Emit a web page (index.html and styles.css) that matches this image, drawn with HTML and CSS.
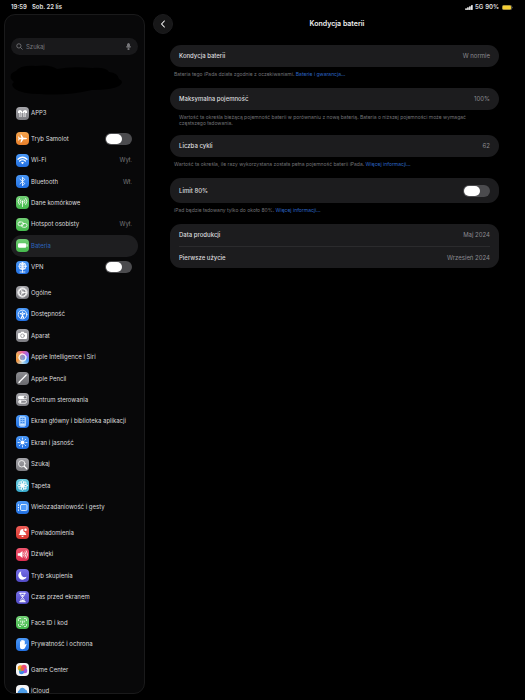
FILE: index.html
```html
<!DOCTYPE html>
<html lang="pl">
<head>
<meta charset="utf-8">
<meta name="viewport" content="width=device-width, initial-scale=1">
<title>Kondycja baterii</title>
<link rel="stylesheet" href="styles.css">
</head>
<body>
<header class="status">
  <span class="time">19:59</span>
  <span class="date">Sob. 22 lis</span>
  <svg class="signal" viewBox="0 0 18 12"><rect x="0" y="8" width="3.8" height="4" rx="1"/><rect x="4.6" y="5.5" width="3.8" height="6.5" rx="1"/><rect x="9.3" y="3" width="3.8" height="9" rx="1"/><rect x="14" y="0" width="3.8" height="12" rx="1"/></svg>
  <span>5G</span>
  <span>90%</span>
  <svg class="battery" viewBox="0 0 22 10"><rect x=".5" y=".5" width="19" height="9" rx="3" fill="#5c5022" stroke="#777"/><rect x="1" y="1" width="17" height="8" rx="2.4" fill="#f5cf35"/><path d="M20.6 3.3v3.4q1-.6 1-1.700t-1-1.700z" fill="#888"/></svg>
</header>
<div class="layout">
  <aside class="sidebar">
    <label class="search">
      <svg class="lens" viewBox="0 0 14 14"><circle cx="5.800" cy="5.800" r="4.300"/><path d="M9 9l4 4"/></svg>
      <input type="search" placeholder="Szukaj" aria-label="Szukaj">
      <svg class="mic" viewBox="0 0 10 14"><rect x="3" y="1" width="4" height="7.500" rx="2" fill="#77777b"/><path d="M1.200 6v1q0 3.500 3.800 3.500T8.800 7V6M5 10.500V13M3 13h4"/></svg>
    </label>
    <svg class="account" viewBox="0 0 112 34" aria-hidden="true"><path d="M1 16Q-1 10 6 8Q10 2 26 3Q40 1 47 6Q62 3 82 5Q96 4 99 9Q108 10 109 16Q115 19 109 23Q102 27 82 27Q56 33 30 31Q12 31 5 26Q0 22 4 19Z"/></svg>
    <nav class="menu">
      <ul class="group one">
        <li><a class="row" href="#app3"><span class="tile gray"><svg viewBox="0 0 26 26"><path class="f" d="M4 9q0-3 4-3l4 2 1 3 1-3 4-2q4 0 4 3v3h-3v8h-4v-8h-4v8H7v-8H4z"/><path d="M13 7v3M9 11v8M17 11v8" stroke="#99999e"/></svg></span>APP3</a></li>
      </ul>
      <ul class="group seven">
        <li class="row"><span class="tile orange"><svg viewBox="0 0 26 26"><path class="f" d="M22 13q0 1.500-3 1.500h-4L10.500 21H8.700l2.100-6.500H7.200L5.600 17H4.200L5 13l-.8-4h1.400l1.600 2.500h3.600L8.700 5h1.800l4.500 6.500h4q3 0 3 1.500z"/></svg></span><label for="plane">Tryb Samolot</label><input id="plane" class="switch" type="checkbox"></li>
        <li><a class="row" href="#wifi"><span class="tile blue"><svg viewBox="0 0 26 26"><path class="w" d="M4 10.500q9-8 18 0M7.200 14q5.800-5 11.600 0"/><path class="f" d="M9.700 17q3.300-2.500 6.600 0L13 20.500z"/></svg></span>Wi-Fi<span class="value">Wył.</span></a></li>
        <li><a class="row" href="#bluetooth"><span class="tile blue"><svg viewBox="0 0 26 26"><path d="M8 8.500l9.500 8.500-4.500 4.500v-17L17.500 9 8 17.500"/></svg></span>Bluetooth<span class="value">Wł.</span></a></li>
        <li><a class="row" href="#cell"><span class="tile green"><svg viewBox="0 0 26 26"><circle class="f" cx="13" cy="11" r="2"/><path d="M13 12v9M9.500 7.500q-3 3.500 0 7M16.500 7.500q3 3.500 0 7M6.500 5q-5 6 0 12M19.500 5q5 6 0 12"/></svg></span>Dane komórkowe</a></li>
        <li><a class="row" href="#hotspot"><span class="tile green"><svg viewBox="0 0 26 26"><rect x="4" y="8" width="11" height="7.500" rx="3.700"/><rect x="11" y="11" width="11" height="7.500" rx="3.700"/></svg></span>Hotspot osobisty<span class="value">Wył.</span></a></li>
        <li><a class="row selected" href="#battery" aria-current="page"><span class="tile green"><svg viewBox="0 0 26 26"><rect class="f" x="4" y="8.500" width="16.500" height="9" rx="2.500"/><path d="M22.300 11.500v3"/></svg></span>Bateria</a></li>
        <li class="row"><span class="tile blue"><svg viewBox="0 0 26 26"><circle cx="13" cy="10.500" r="7"/><path d="M13 3.500v19M6 10.500h14M8 6q5 3 10 0M8 15q5-3 10 0M13 3.500q-6.500 7 0 14q6.500-7 0-14M8 22h10"/></svg></span><label for="vpn">VPN</label><input id="vpn" class="switch" type="checkbox"></li>
      </ul>
      <ul class="group eleven">
        <li><a class="row" href="#general"><span class="tile gray"><svg viewBox="0 0 26 26"><circle class="w" cx="13" cy="13" r="7.500"/><circle cx="13" cy="13" r="9.200" stroke-dasharray="1.500 1.400"/><path d="M13 13h7M13 13l-3.500-6M13 13l-3.500 6"/><circle cx="13" cy="13" r="2.500"/></svg></span>Ogólne</a></li>
        <li><a class="row" href="#access"><span class="tile blue"><svg viewBox="0 0 26 26"><circle cx="13" cy="13" r="8.700"/><circle class="f" cx="13" cy="8.500" r="1.500"/><path class="w" d="M8.500 11.200l4.500 1 4.500-1M13 12v3l-2 4M13 15l2 4"/></svg></span>Dostępność</a></li>
        <li><a class="row" href="#camera"><span class="tile gray"><svg viewBox="0 0 26 26"><path class="f" d="M4 10q0-2 2-2h3l1.500-2.500h5L17 8h3q2 0 2 2v8q0 2-2 2H6q-2 0-2-2z"/><circle cx="13" cy="13.500" r="3.700" stroke="#929297"/></svg></span>Aparat</a></li>
        <li><a class="row" href="#siri"><span class="tile siri"><svg viewBox="0 0 26 26"><circle class="w" cx="13" cy="13" r="6.500" fill="#8996cb" opacity=".8"/><path d="M13 5l4 3 4 3-1 5-3 4-5 1-5-3-2-5 3-5z" opacity=".7"/></svg></span>Apple Intelligence i Siri</a></li>
        <li><a class="row" href="#pencil"><span class="tile steel"><svg viewBox="0 0 26 26"><path class="w" d="M6.500 20L20.500 6"/><path d="M5 21.500l3-1"/></svg></span>Apple Pencil</a></li>
        <li><a class="row" href="#control"><span class="tile gray"><svg viewBox="0 0 26 26"><rect class="f" x="4" y="5.500" width="18" height="6.500" rx="3.200"/><circle cx="18" cy="8.700" r="1.800" fill="#77777c" stroke="#77777c"/><rect x="5" y="14.500" width="16" height="6" rx="3"/><circle class="f" cx="8.500" cy="17.500" r="2.300"/></svg></span>Centrum sterowania</a></li>
        <li><a class="row" href="#home"><span class="tile blue"><svg viewBox="0 0 26 26"><rect x="7" y="3.500" width="12" height="19" rx="2.500" fill="#8fc2ff" stroke="#c4dfff"/><path d="M10 7h1.500M14.500 7H16M10 11h1.500M14.500 11H16M10 15h1.500M14.500 15H16" stroke="#2878e5"/><path d="M9.500 19.500h7"/></svg></span>Ekran główny i biblioteka aplikacji</a></li>
        <li><a class="row" href="#display"><span class="tile blue"><svg viewBox="0 0 26 26"><circle class="f" cx="13" cy="13" r="4"/><path d="M13 4v2.500M13 19.500V22M4 13h2.500M19.500 13H22M6.600 6.600l1.800 1.800M17.600 17.600l1.800 1.800M6.600 19.400l1.800-1.800M17.600 8.400l1.800-1.800"/></svg></span>Ekran i jasność</a></li>
        <li><a class="row" href="#search"><span class="tile gray"><svg viewBox="0 0 26 26"><circle cx="11.500" cy="11.500" r="6.500"/><path class="w" d="M16.500 16.500l5 5"/></svg></span>Szukaj</a></li>
        <li><a class="row" href="#wallpaper"><span class="tile cyan"><svg viewBox="0 0 26 26"><g><ellipse cx="13" cy="7.500" rx="2.700" ry="4"/><ellipse cx="13" cy="18.500" rx="2.700" ry="4"/><ellipse cx="7.500" cy="13" rx="4" ry="2.700"/><ellipse cx="18.500" cy="13" rx="4" ry="2.700"/></g><g transform="rotate(45 13 13)"><ellipse cx="13" cy="7.500" rx="2.700" ry="4"/><ellipse cx="13" cy="18.500" rx="2.700" ry="4"/><ellipse cx="7.500" cy="13" rx="4" ry="2.700"/><ellipse cx="18.500" cy="13" rx="4" ry="2.700"/></g><circle class="f" cx="13" cy="13" r="3"/></svg></span>Tapeta</a></li>
        <li><a class="row" href="#multitask"><span class="tile blue"><svg viewBox="0 0 26 26"><rect x="9" y="7" width="13" height="12" rx="2.500" fill="#4e9bfb"/><path class="w" d="M5 7.500v1M5 12.500v1M5 17.500v1"/></svg></span>Wielozadaniowość i gesty</a></li>
      </ul>
      <ul class="group four">
        <li><a class="row" href="#notifications"><span class="tile red"><svg viewBox="0 0 26 26"><path class="f" d="M5 18q3-2.500 3-7t5-5q1 0 2 .5a4 4 0 0 0 3.500 6q.5 3 2.500 5.500zM10.500 19.500h5q-.5 2.500-2.500 2.500t-2.500-2.500z"/><circle class="f" cx="19" cy="7.500" r="2.500"/></svg></span>Powiadomienia</a></li>
        <li><a class="row" href="#sounds"><span class="tile pink"><svg viewBox="0 0 26 26"><path class="f" d="M3.500 10.500h3.800L13 6v14l-5.700-4.500H3.500z"/><path d="M15.500 10q2 3 0 6M18 7.800q4 5.200 0 10.400M20.500 5.500q5.500 7.500 0 15"/></svg></span>Dźwięki</a></li>
        <li><a class="row" href="#focus"><span class="tile violet"><svg viewBox="0 0 26 26"><path class="f" d="M10.500 4.500a8.700 8.700 0 1 0 11 11q-6 2.500-9.500-1.500-3-4-1.500-9.500z"/></svg></span>Tryb skupienia</a></li>
        <li><a class="row" href="#screentime"><span class="tile violet"><svg viewBox="0 0 26 26"><path class="w" d="M7.500 4.500h11M7.500 21.500h11"/><path d="M9 5q0 5 4 8q4-3 4-8M9 21q0-5 4-8q4 3 4 8"/><path class="f" d="M9.500 21q1-3.500 3.500-4t3.500 4zM10.500 8h5L13 12z"/></svg></span>Czas przed ekranem</a></li>
      </ul>
      <ul class="group two">
        <li><a class="row" href="#faceid"><span class="tile green"><svg viewBox="0 0 26 26"><path d="M5 9V7q0-2 2-2h2M17 5h2q2 0 2 2v2M21 17v2q0 2-2 2h-2M9 21H7q-2 0-2-2v-2M9.500 10v2M16.500 10v2M13.300 10v4.500h-1M9.500 17q3.500 2.500 7 0"/></svg></span>Face ID i kod</a></li>
        <li><a class="row" href="#privacy"><span class="tile blue"><svg viewBox="0 0 26 26"><path class="f" d="M8 14V8q0-1.500 1.200-1.500T10.400 8V5.500Q10.400 4 11.600 4t1.200 1.500V5q0-1.500 1.200-1.500T15.200 5v1.500q0-1.300 1.200-1.300t1.200 1.300V14l1.800-2q1.300-1 2 0l-2.500 6q-1.500 4.500-6 4.500-5 0-5-5z"/></svg></span>Prywatność i ochrona</a></li>
      </ul>
      <ul class="group two">
        <li><a class="row" href="#gamecenter"><span class="tile white"><svg viewBox="0 0 26 26"><g stroke="none"><circle cx="9" cy="10" r="5.500" fill="#f7a529"/><circle cx="16" cy="9" r="5.500" fill="#ef4a78"/><circle cx="17.500" cy="15.500" r="5" fill="#a354dc"/><circle cx="11" cy="17.500" r="5" fill="#3f86ea"/><circle cx="9" cy="14" r="3" fill="#67c95c"/><circle cx="13" cy="12" r="4" fill="#f0623f"/></g></svg></span>Game Center</a></li>
        <li><a class="row" href="#icloud"><span class="tile white"><svg viewBox="0 0 26 26"><path d="M7 20a5 5 0 0 1-.5-9.500A6.500 6.500 0 0 1 18.500 9a5.700 5.700 0 0 1 .5 11z" fill="#4d9de8" stroke="none"/></svg></span>iCloud</a></li>
      </ul>
    </nav>
  </aside>
  <main class="main">
    <div class="titlebar">
      <button class="back" type="button" aria-label="Wstecz"><svg viewBox="0 0 8 12"><path d="M6 1.500L1.800 6 6 10.500"/></svg></button>
      <h1>Kondycja baterii</h1>
    </div>
    <div class="content">
      <section>
        <div class="card"><div class="line"><span>Kondycja baterii</span><span class="amount">W normie</span></div></div>
        <p class="note">Bateria tego iPada działa zgodnie z oczekiwaniami. <a href="#warranty">Baterie i gwarancja…</a></p>
      </section>
      <section>
        <div class="card"><div class="line"><span>Maksymalna pojemność</span><span class="amount">100%</span></div></div>
        <p class="note inset">Wartość ta określa bieżącą pojemność baterii w porównaniu z nową baterią. Bateria o niższej pojemności może wymagać częstszego ładowania.</p>
      </section>
      <section>
        <div class="card"><div class="line"><span>Liczba cykli</span><span class="amount">62</span></div></div>
        <p class="note">Wartość ta określa, ile razy wykorzystana została pełna pojemność baterii iPada. <a href="#cycles">Więcej informacji…</a></p>
      </section>
      <section>
        <div class="card"><div class="line tall"><label for="limit">Limit 80%</label><input id="limit" class="switch" type="checkbox"></div></div>
        <p class="note">iPad będzie ładowany tylko do około 80%. <a href="#limit-info">Więcej informacji…</a></p>
      </section>
      <section>
        <div class="card">
          <div class="line"><span>Data produkcji</span><span class="amount">Maj 2024</span></div>
          <div class="line"><span>Pierwsze użycie</span><span class="amount">Wrzesień 2024</span></div>
        </div>
      </section>
    </div>
  </main>
</div>
</body>
</html>
```

FILE: styles.css
```css
* { box-sizing: border-box; }
body {
  margin: 0;
  height: 100vh;
  display: flex;
  flex-direction: column;
  overflow: hidden;
  background: #000;
  color: #dcdcde;
  font: 6px/8px Inter, "Noto Sans", sans-serif;
}
a { color: inherit; text-decoration: none; }
ul { list-style: none; margin: 0; padding: 0; }

.status {
  display: flex;
  align-items: center;
  gap: 2px;
  height: 14px;
  padding: 0 12px 0 11px;
  font-weight: 600;
  color: #e2e2e2;
}
.date { margin: 0 auto 0 3px; }
.signal { width: 8px; height: 5px; fill: #fff; }
.battery { width: 11px; height: 5px; margin-left: 1px; }

.layout {
  flex: 1;
  min-height: 0;
  display: grid;
  grid-template-columns: 141px 1fr;
  gap: 4px;
  padding: 0 0 6px 4px;
}
.sidebar {
  overflow: hidden;
  padding: 23px 6px 0;
  border: 1px solid #1a1a1b;
  border-radius: 11px;
  background: #080809;
}
.search {
  display: flex;
  align-items: center;
  gap: 3px;
  height: 17px;
  padding: 0 7px 0 5px;
  border-radius: 9px;
  background: #19191b;
}
.search svg { fill: none; stroke: #85858a; stroke-width: 1.5; height: 7px; }
.lens { width: 7px; }
.mic { width: 5px; }
.search input {
  flex: 1;
  min-width: 0;
  padding: 0;
  border: 0;
  outline: 0;
  background: none;
  color: inherit;
  font: inherit;
}
.search input::placeholder { color: #77777b; opacity: 1; }
.account { display: block; width: 112px; height: 34px; margin: 8px 0 0 -1px; fill: #000; }

.menu { display: grid; gap: 4px; margin-top: 5px; }
.group { display: grid; grid-auto-rows: 1fr; }
.one { min-height: 22px; }
.two { min-height: 43px; }
.four { min-height: 86px; }
.seven { min-height: 150px; }
.eleven { min-height: 236px; }
.row {
  display: flex;
  align-items: center;
  gap: 2px;
  height: 100%;
  padding: 0 6px 0 5px;
  white-space: nowrap;
}
.row .switch, .value { margin-left: auto; }
.value { color: #78787c; }
.selected { border-radius: 11px; background: #1e1e20; color: #2c65bd; }

.tile { width: 13px; height: 13px; flex: none; border-radius: 4px; overflow: hidden; }
.tile svg {
  display: block;
  width: 13px;
  height: 13px;
  fill: none;
  stroke: #fff;
  stroke-width: 1.6;
  stroke-linecap: round;
  stroke-linejoin: round;
}
.tile .f { fill: #fff; stroke: none; }
.tile .w { stroke-width: 2.4; }
.gray { background: linear-gradient(#a5a5aa, #7c7c81); }
.steel { background: linear-gradient(#8d8d91, #6a6a6e); }
.blue { background: linear-gradient(#4a98f7, #2270e2); }
.green { background: linear-gradient(#72cf75, #45b94d); }
.orange { background: linear-gradient(#f4a44e, #e87f2a); }
.cyan { background: linear-gradient(#6fd0e4, #36a9cb); }
.red { background: linear-gradient(#ee5d57, #d93832); }
.pink { background: linear-gradient(#f0566e, #dc2e50); }
.violet { background: linear-gradient(#7770e8, #5049c4); }
.white { background: #f4f4f6; }
.siri { background: conic-gradient(#e65ea0, #9a6cf0, #4c9cf0, #b9dced, #f3953d, #f2b05e, #e65ea0); }

.switch {
  appearance: none;
  flex: none;
  width: 27px;
  height: 12px;
  margin: 0;
  padding: 1px;
  border-radius: 6px;
  background: #4b4b4e;
}
.switch::before {
  content: "";
  display: block;
  width: 16px;
  height: 10px;
  border-radius: 5px;
  background: #fff;
}
.switch:checked { background: #34c759; }
.switch:checked::before { margin-left: auto; }

.titlebar {
  display: grid;
  grid-template-columns: 20px 1fr 20px;
  align-items: center;
  padding: 0 4px;
}
.back {
  display: grid;
  place-items: center;
  width: 20px;
  height: 20px;
  padding: 0;
  border: 1px solid #1c1c1e;
  border-radius: 50%;
  background: #171718;
}
.back svg { width: 6px; height: 8px; fill: none; stroke: #fff; stroke-width: 1.6; stroke-linecap: round; stroke-linejoin: round; }
h1 { margin: 0; font-size: 7px; line-height: 10px; font-weight: 600; text-align: center; color: #f0f0f0; }

.content { padding: 11px 26px 0 21px; }
.card { border-radius: 11px; background: #1c1c1e; }
.line {
  display: flex;
  align-items: center;
  justify-content: space-between;
  height: 22px;
  margin: 0 9px;
  font-weight: 500;
}
.line + .line { border-top: 1px solid #2b2b2d; }
.tall { height: 25px; }
.amount { font-weight: 400; color: #8b8b90; }
.note {
  margin: 0;
  padding: 4px 4px 11px;
  font-size: 5px;
  line-height: 6px;
  color: #727276;
}
.inset { padding: 4px 9px 9px; }
.note a { color: #2c65c4; }
```
